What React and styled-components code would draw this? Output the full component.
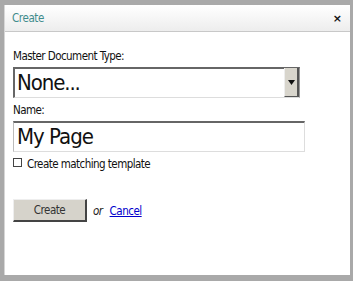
import React from "react";
import styled, { createGlobalStyle } from "styled-components";

const GlobalStyle = createGlobalStyle`
  html, body {
    margin: 0;
    padding: 0;
    background: #ffffff;
  }
  body {
    font-family: "DejaVu Sans Condensed", "DejaVu Sans", "Liberation Sans", sans-serif;
  }
`;

const Frame = styled.div`
  box-sizing: border-box;
  width: 353px;
  height: 281px;
  padding: 5px 3px 6px 4px;
  background: #a9a9a9;
`;

const Dialog = styled.div`
  box-sizing: border-box;
  height: 100%;
  display: flex;
  flex-direction: column;
  background: #ffffff;
  border-left: 1px solid #d6d6d6;
`;

const TitleBar = styled.div`
  box-sizing: border-box;
  height: 27px;
  display: flex;
  align-items: center;
  justify-content: space-between;
  padding: 0 8px 0 7px;
  background: linear-gradient(#ffffff, #ededed);
  border-bottom: 1px solid #c8c8c8;
`;

const Title = styled.span`
  font-size: 11.5px;
  letter-spacing: -0.4px;
  color: #3f8c8c;
`;

const Close = styled.span`
  font-family: "DejaVu Sans", sans-serif;
  font-size: 11px;
  font-weight: bold;
  color: #111;
`;

const Body = styled.div`
  display: flex;
  flex-direction: column;
  padding: 17px 8px 0 8px;
`;

const Label = styled.label`
  font-size: 11.5px;
  line-height: 15px;
  letter-spacing: -0.55px;
  color: #111;
  margin-bottom: 3px;
`;

const Select = styled.div`
  box-sizing: border-box;
  width: 287px;
  height: 31px;
  display: flex;
  border-top: 2px solid #666;
  border-left: 2px solid #666;
  border-right: 1px solid #999;
  border-bottom: 1px solid #ddd;
  margin-bottom: 5px;
`;

const SelectValue = styled.div`
  flex: 1;
  font-size: 22px;
  line-height: 28px;
  letter-spacing: -1.1px;
  padding-left: 2px;
  color: #111;
`;

const Arrow = styled.div`
  width: 12px;
  display: flex;
  align-items: center;
  justify-content: center;
  background: #d8d5cc;
  border-left: 1px solid #eee;
  border-right: 2px solid #555;
  border-bottom: 1px solid #555;
  margin-top: -1px;
`;

const TextInput = styled.div`
  box-sizing: border-box;
  width: 292px;
  height: 31px;
  border-top: 2px solid #666;
  border-left: 1px solid #bbb;
  border-right: 1px solid #ddd;
  border-bottom: 1px solid #ddd;
  font-size: 22px;
  line-height: 28px;
  letter-spacing: -1px;
  padding-left: 3px;
  color: #111;
`;

const CheckRow = styled.div`
  display: flex;
  align-items: center;
  gap: 5px;
  margin-top: 5px;
  font-size: 11.5px;
  line-height: 15px;
  letter-spacing: -0.55px;
  color: #111;
`;

const Box = styled.span`
  box-sizing: border-box;
  width: 9px;
  height: 9px;
  border: 1px solid #444;
  margin-top: -4px;
`;

const Actions = styled.div`
  display: flex;
  align-items: center;
  gap: 5px;
  margin-top: 27px;
  font-size: 11.5px;
  letter-spacing: -0.5px;
`;

const Button = styled.div`
  box-sizing: border-box;
  width: 74px;
  height: 23px;
  display: flex;
  align-items: center;
  justify-content: center;
  background: #d6d3cb;
  border-top: 1px solid #eee;
  border-left: 1px solid #eee;
  border-right: 2px solid #444;
  border-bottom: 2px solid #444;
  color: #333;
`;

const Or = styled.span`
  font-style: italic;
  color: #222;
  margin-left: 1px;
`;

const Link = styled.a`
  color: #0000cc;
  text-decoration: underline;
  margin-left: 2px;
`;

export default function App() {
  return (
    <>
      <GlobalStyle />
      <Frame>
        <Dialog>
          <TitleBar>
            <Title>Create</Title>
            <Close>×</Close>
          </TitleBar>
          <Body>
            <Label>Master Document Type:</Label>
            <Select>
              <SelectValue>None...</SelectValue>
              <Arrow>
                <svg width="7" height="5" viewBox="0 0 7 5">
                  <path d="M0 0h7L3.5 5z" fill="#111" />
                </svg>
              </Arrow>
            </Select>
            <Label>Name:</Label>
            <TextInput>My Page</TextInput>
            <CheckRow>
              <Box />
              <span>Create matching template</span>
            </CheckRow>
            <Actions>
              <Button>Create</Button>
              <Or>or</Or>
              <Link href="#">Cancel</Link>
            </Actions>
          </Body>
        </Dialog>
      </Frame>
    </>
  );
}
